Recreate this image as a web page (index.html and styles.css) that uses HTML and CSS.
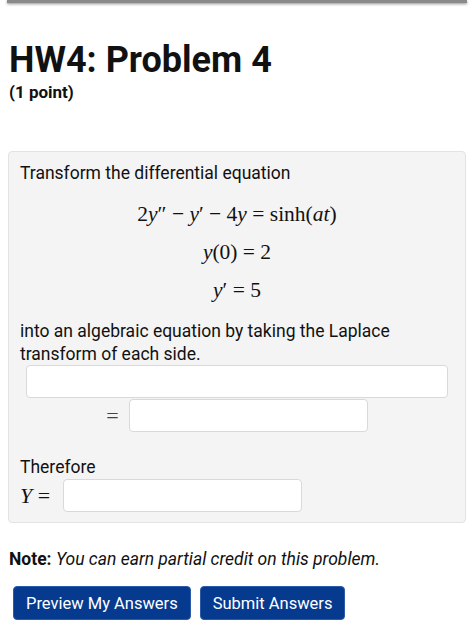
FILE: index.html
```html
<!DOCTYPE html>
<html>
<head>
<meta charset="utf-8">
<link rel="stylesheet" href="styles.css">
</head>
<body>
<div class="topbar"></div>
<main class="page">
  <h1 class="title">HW4: Problem 4</h1>
  <div class="points">(1 point)</div>
  <section class="problem">
    <p class="text first">Transform the differential equation</p>
    <div class="math-block">
      <div class="mline">2<i>y</i>&Prime; &minus; <i>y</i>&prime; &minus; 4<i>y</i> = sinh(<i>at</i>)</div>
      <div class="mline"><i>y</i>(0) = 2</div>
      <div class="mline"><i>y</i>&prime; = 5</div>
    </div>
    <p class="text">into an algebraic equation by taking the Laplace transform of each side.</p>
    <div class="ans-row full"><span class="input wide"></span></div>
    <div class="ans-row eq"><span class="eqsign">=</span><span class="input mid"></span></div>
    <p class="text therefore">Therefore</p>
    <div class="y-row"><span class="yvar"><i>Y</i>&nbsp;=</span><span class="input mid"></span></div>
  </section>
  <p class="note"><b>Note:</b> <i>You can earn partial credit on this problem.</i></p>
  <div class="buttons">
    <button class="btn">Preview My Answers</button>
    <button class="btn">Submit Answers</button>
  </div>
</main>
</body>
</html>
```
FILE: styles.css
```css
html, body {
  margin: 0;
  padding: 0;
  background: #ffffff;
}
body {
  font-family: Roboto, "Noto Sans", sans-serif;
  color: #111;
}
.topbar {
  height: 3px;
  margin: 0 7px;
  background: #8a8a8a;
  box-shadow: 0 1px 3px rgba(0,0,0,0.45);
}
.page {
  padding: 0 8px;
}
.title {
  margin: 35px 0 0 1px;
  font-size: 36px;
  line-height: 44px;
  font-weight: 700;
}
.points {
  margin: 0 0 0 1px;
  font-size: 17px;
  line-height: 20px;
  font-weight: 700;
}
.problem {
  margin-top: 49px;
  background: #f4f4f4;
  border: 1px solid #e3e3e3;
  border-radius: 4px;
  padding: 10px 11px 10px;
  height: 350px;
}
.text {
  margin: 0;
  font-size: 17.5px;
  line-height: 23px;
}
.math-block {
  margin: 17px 0 18px;
  font-family: "Liberation Serif", "DejaVu Serif", serif;
  font-size: 21.5px;
  text-align: center;
}
.mline {
  line-height: 24px;
  margin-bottom: 14px;
}
.mline:last-child { margin-bottom: 0; }
.ans-row {
  display: flex;
  justify-content: center;
  align-items: center;
}
.ans-row.full { margin-top: -1px; }
.ans-row.eq { margin-top: 1px; }
.input {
  display: block;
  background: #fff;
  border: 1px solid #d9d9d9;
  border-radius: 4px;
  height: 31px;
}
.input.wide { width: 420px; }
.input.mid { width: 237px; }
.eqsign {
  font-family: "Liberation Serif", serif;
  font-size: 22px;
  color: #444;
  margin-right: 10px;
}
.therefore { margin-top: 24px; }
.y-row {
  display: flex;
  align-items: center;
  margin-top: 0;
}
.yvar {
  font-family: "Liberation Serif", serif;
  font-size: 22px;
  margin-right: 13px;
}
.note {
  margin: 25px 0 0 1px;
  font-size: 17.5px;
  line-height: 22px;
}
.buttons {
  display: flex;
  gap: 9px;
  margin: 16px 0 0 5px;
}
.btn {
  background: #063a8f;
  color: #fff;
  border: 1px solid #2a5aa8;
  border-radius: 4px;
  font-family: Roboto, sans-serif;
  font-size: 16.5px;
  height: 34px;
  padding: 0 12px;
}
```
